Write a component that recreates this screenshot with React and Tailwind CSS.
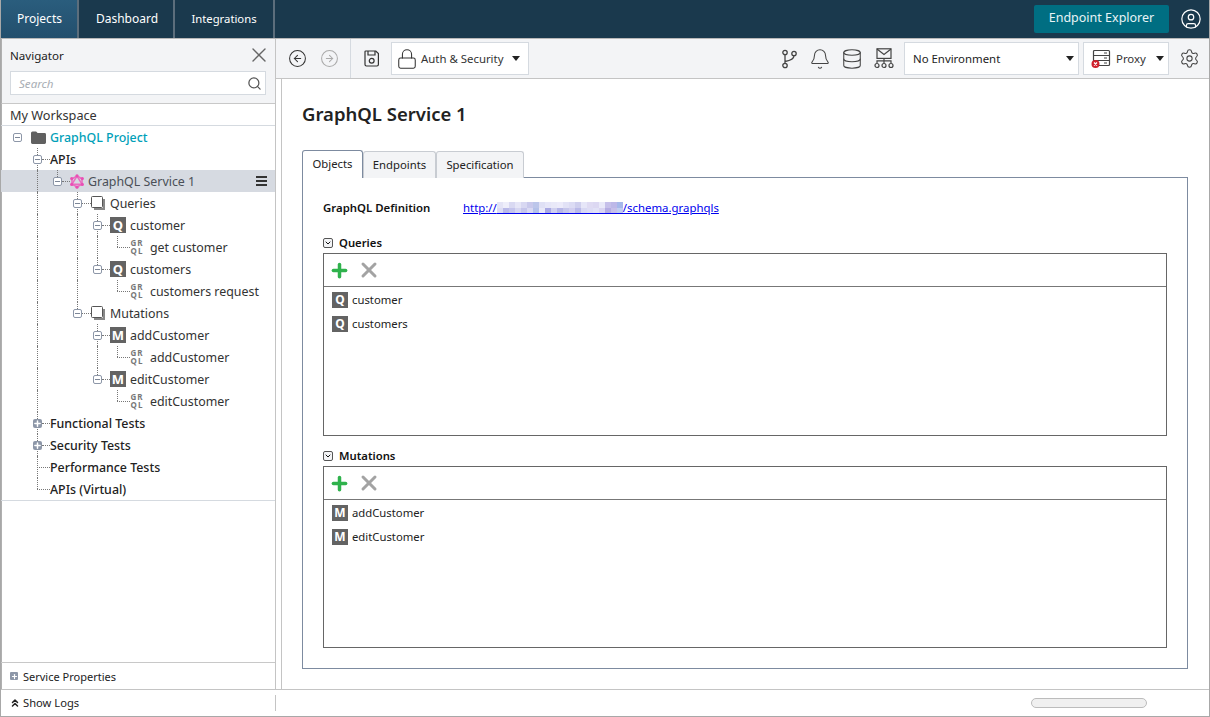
import React from "react";
import { CircleArrowLeft, CircleArrowRight, Lock, Bell, Database, Settings, CircleUser, Search, X, Plus, ChevronsUp, ChevronDown } from "lucide-react";

const Caret = () => <span className="w-0 h-0 border-x-[4px] border-x-transparent border-t-[5px] border-t-[#222]" />;

const Expander = ({ open }) =>
  open ? (
    <span className="relative z-10 w-[9px] h-[9px] shrink-0 rounded-[2px] border border-[#8d97a8] bg-white flex items-center justify-center">
      <span className="w-[5px] h-px bg-[#7d8798]" />
    </span>
  ) : (
    <span className="relative z-10 w-[9px] h-[9px] shrink-0 rounded-[2px] bg-[#8d97a8] text-white flex items-center justify-center">
      <Plus size={9} strokeWidth={4} />
    </span>
  );

const Stub = ({ w }) => <span className="border-t border-dotted border-[#777] shrink-0" style={{ width: w }} />;

const Letter = ({ c }) => (
  <span className="w-4 h-4 shrink-0 bg-[#636363] text-white text-[13px] leading-none font-bold flex items-center justify-center">{c}</span>
);

const Gql = () => (
  <span className="block w-[14px] shrink-0 text-[8px] leading-[8px] font-bold tracking-[1px] text-[#777] text-center">GR QL</span>
);

const Stack = () => (
  <svg width="14" height="15" viewBox="0 0 14 15" className="shrink-0">
    <path d="M3 13h10V3" fill="none" stroke="#888" strokeWidth="2" />
    <rect x="0.5" y="0.5" width="11" height="11" rx="1" fill="#fff" stroke="#555" />
  </svg>
);

const GqlLogo = () => (
  <svg width="14" height="15" viewBox="0 0 14 15" className="shrink-0">
    <g fill="none" stroke="#ea6cc0" strokeWidth="1.5">
      <path d="M7 2 12 4.8v5.4L7 13 2 10.2V4.8z" />
      <path d="M7 2 12 10.2H2z" />
    </g>
    <g fill="#e94fb5">
      <circle cx="7" cy="1.8" r="1.6" /><circle cx="12.3" cy="4.6" r="1.6" /><circle cx="12.3" cy="10.4" r="1.6" />
      <circle cx="7" cy="13.2" r="1.6" /><circle cx="1.7" cy="10.4" r="1.6" /><circle cx="1.7" cy="4.6" r="1.6" />
    </g>
  </svg>
);

const Folder = () => (
  <svg width="15" height="13" viewBox="0 0 15 13" className="shrink-0">
    <path d="M0 2a1.5 1.5 0 0 1 1.5-1.5h3.6L6.6 2h7A1.4 1.4 0 0 1 15 3.4v8.1a1.4 1.4 0 0 1-1.4 1.4H1.4A1.4 1.4 0 0 1 0 11.5z" fill="#606060" />
  </svg>
);

const X1 = 37, X2 = 57, X3 = 77, X4 = 97, X5 = 117;
const bold = "font-medium text-[#222]";
const rows = [
  { cx: 17, open: true, stub: 0, gap: 9, icon: <Folder />, label: "GraphQL Project", cls: "text-[#00a0b8] font-medium", tg: 4 },
  { cx: X1, open: true, stub: 8, label: "APIs", cls: bold, v: [[X1, "t"], [X1, "b"]] },
  { cx: X2, open: true, stub: 8, icon: <GqlLogo />, label: "GraphQL Service 1", cls: "text-[#4a4f57]", tg: 4, v: [[X1, "f"], [X2, "t"]], sel: true },
  { cx: X3, open: true, stub: 9, icon: <Stack />, label: "Queries", v: [[X1, "f"], [X3, "t"], [X3, "b"]], tg: 5 },
  { cx: X4, open: true, stub: 8, icon: <Letter c="Q" />, label: "customer", v: [[X1, "f"], [X3, "f"], [X4, "t"], [X4, "b"]], tg: 4 },
  { lx: X5, stub: 13, icon: <Gql />, label: "get customer", v: [[X1, "f"], [X3, "f"], [X4, "f"], [X5, "t"]], tg: 6 },
  { cx: X4, open: true, stub: 8, icon: <Letter c="Q" />, label: "customers", v: [[X1, "f"], [X3, "f"], [X4, "t"]], tg: 4 },
  { lx: X5, stub: 13, icon: <Gql />, label: "customers request", v: [[X1, "f"], [X3, "f"], [X5, "t"]], tg: 6 },
  { cx: X3, open: true, stub: 9, icon: <Stack />, label: "Mutations", v: [[X1, "f"], [X3, "t"]], tg: 5 },
  { cx: X4, open: true, stub: 8, icon: <Letter c="M" />, label: "addCustomer", v: [[X1, "f"], [X4, "t"], [X4, "b"]], tg: 4 },
  { lx: X5, stub: 13, icon: <Gql />, label: "addCustomer", v: [[X1, "f"], [X4, "f"], [X5, "t"]], tg: 6 },
  { cx: X4, open: true, stub: 8, icon: <Letter c="M" />, label: "editCustomer", v: [[X1, "f"], [X4, "t"]], tg: 4 },
  { lx: X5, stub: 13, icon: <Gql />, label: "editCustomer", v: [[X1, "f"], [X5, "t"]], tg: 6 },
  { cx: X1, open: false, stub: 8, label: "Functional Tests", cls: bold, v: [[X1, "t"], [X1, "b"]] },
  { cx: X1, open: false, stub: 8, label: "Security Tests", cls: bold, v: [[X1, "t"], [X1, "b"]] },
  { lx: X1, stub: 13, label: "Performance Tests", cls: bold, v: [[X1, "f"]] },
  { lx: X1, stub: 13, label: "APIs (Virtual)", cls: bold, v: [[X1, "t"]] },
];

const Row = ({ r }) => {
  const left = r.cx !== undefined ? r.cx - 5 : r.lx - 1;
  return (
    <div className={`relative h-[22px] flex items-center ${r.sel ? "bg-[#d6dae1]" : ""}`} style={{ paddingLeft: left }}>
      {(r.v || []).map(([x, k], i) => (
        <span
          key={i}
          className="absolute border-l border-dotted border-[#777]"
          style={{ left: x - 1, top: k === "b" ? 11 : 0, height: k === "f" ? 22 : 11 }}
        />
      ))}
      {r.cx !== undefined && <Expander open={r.open} />}
      {r.stub > 0 && <Stub w={r.stub} />}
      {r.gap ? <span style={{ width: r.gap }} /> : null}
      {r.icon}
      <span className={`whitespace-nowrap pt-[2px] ${r.cls || "text-[#333]"}`} style={{ marginLeft: r.tg || 0 }}>{r.label}</span>
      {r.sel && (
        <span className="ml-auto mr-[8px] w-[11px] flex flex-col gap-[2px]">
          <span className="h-[2px] bg-[#333]" /><span className="h-[2px] bg-[#333]" /><span className="h-[2px] bg-[#333]" />
        </span>
      )}
    </div>
  );
};

const Sidebar = () => (
  <aside className="w-[275px] shrink-0 flex flex-col border-r border-[#c4c4c4] bg-white text-[12.4px] leading-[22px] shadow-[inset_1px_0_0_#b0b0b0]">
    <div className="h-[65px] shrink-0 bg-[#f3f4f6] border-b border-[#c8c8c8] border-l border-l-[#b0b0b0] pl-[8px] pr-[9px] flex flex-col">
      <div className="h-[32px] flex items-center justify-between text-[#222] text-[11.6px]">
        <span className="pt-[2px]">Navigator</span>
        <X size={24} strokeWidth={1.4} className="text-[#666] -mr-[5px]" />
      </div>
      <div className="h-[24px] bg-white border border-[#d5dae0] flex items-center justify-between pl-[8px] pr-[3px]">
        <span className="italic text-[11.6px] text-[#a8adb4] pt-[2px]">Search</span>
        <Search size={15} strokeWidth={2} className="text-[#555]" />
      </div>
    </div>
    <div className="h-[22px] shrink-0 pl-[9px] border-b border-[#d5dae0] text-[#333] text-[12.7px] flex items-center">My Workspace</div>
    <div className="border-b border-[#d5dae0]">
      {rows.map((r, i) => <Row key={i} r={r} />)}
    </div>
    <div className="flex-1" />
    <div className="h-[27px] shrink-0 border-t border-[#c8c8c8] pl-[9px] flex items-center gap-[5px] text-[11px] text-[#222]">
      <span className="w-[8px] h-[8px] rounded-[1px] bg-[#8d97a8] text-white flex items-center justify-center"><Plus size={7} strokeWidth={4} /></span>
      <span className="pt-[1px]">Service Properties</span>
    </div>
  </aside>
);

const SaveIcon = () => (
  <svg width="16" height="17" viewBox="0 0 16 17" fill="none" stroke="#333" strokeWidth="1.2" className="shrink-0">
    <path d="M1.8 1h10l2.6 2.6v11a1.4 1.4 0 0 1-1.4 1.4H2.4A1.4 1.4 0 0 1 1 14.6V1.8A.8.8 0 0 1 1.8 1z" />
    <path d="M4 1v4h7V1" />
    <circle cx="7.7" cy="10.8" r="2.4" />
  </svg>
);

const Branch = () => (
  <svg width="15" height="20" viewBox="0 0 15 20" fill="none" stroke="#444" strokeWidth="1.3">
    <circle cx="3" cy="3.5" r="2.2" /><circle cx="3" cy="16.5" r="2.2" /><circle cx="12" cy="4.5" r="2.2" />
    <path d="M3 5.7v8.6M12 6.7c0 4-5 5-9 5.8" />
  </svg>
);

const NetMail = () => (
  <svg width="20" height="21" viewBox="0 0 20 21" fill="none" stroke="#444" strokeWidth="1.2">
    <rect x="3" y="0.8" width="14" height="9.6" />
    <path d="M3 1 10 6.5 17 1M10 10.5V15M3 15v-2.2h14V15" />
    <circle cx="3" cy="17.5" r="2" /><circle cx="10" cy="17.5" r="2" /><circle cx="17" cy="17.5" r="2" />
  </svg>
);

const ProxyIcon = () => (
  <svg width="20" height="20" viewBox="0 0 20 20" fill="none">
    <rect x="2.5" y="1.5" width="16" height="15" rx="1" stroke="#444" strokeWidth="1.2" />
    <path d="M2.5 6.5h16M2.5 11.5h16M13 4h3M13 9h3M13 14h3" stroke="#444" strokeWidth="1.2" />
    <circle cx="4.5" cy="15" r="4" fill="#d0202c" />
    <path d="M3 13.5l3 3M6 13.5l-3 3" stroke="#fff" strokeWidth="1.3" />
  </svg>
);

const Toolbar = () => (
  <div className="h-[40px] shrink-0 bg-[#f3f4f6] border-b border-[#c4c4c4] flex items-center text-[11.4px] text-[#333]">
    <div className="w-[75px] h-full shrink-0 border-r border-[#d5dae0] flex items-center pl-[12px] gap-[13px]">
      <CircleArrowLeft size={19} strokeWidth={1.3} className="text-[#333]" />
      <CircleArrowRight size={19} strokeWidth={1.3} className="text-[#aaa]" />
    </div>
    <span className="ml-[13px] flex"><SaveIcon /></span>
    <div className="ml-[11px] w-[138px] h-[33px] bg-white border border-[#d5dae0] flex items-center pl-[4px]">
      <Lock size={22} strokeWidth={1.15} className="text-[#333] shrink-0" />
      <span className="ml-[3px] whitespace-nowrap pt-[1px]">Auth &amp; Security</span>
      <span className="ml-[9px] flex"><Caret /></span>
    </div>
    <div className="ml-auto flex items-center">
      <Branch />
      <Bell size={22} strokeWidth={1.15} className="ml-[12px] text-[#444]" />
      <Database size={22} strokeWidth={1.15} className="ml-[10px] text-[#444]" />
      <span className="ml-[11px] flex"><NetMail /></span>
      <div className="ml-[10px] w-[175px] h-[33px] bg-white border border-[#d5dae0] flex items-center justify-between pl-[8px] pr-[4px]">
        <span className="text-[#222] pt-[1px]">No Environment</span><Caret />
      </div>
      <div className="ml-[4px] w-[86px] h-[33px] bg-white border border-[#d5dae0] flex items-center pl-[7px] pr-[4px]">
        <ProxyIcon />
        <span className="ml-[5px] text-[#333] pt-[1px]">Proxy</span>
        <span className="ml-auto flex"><Caret /></span>
      </div>
      <Settings size={21} strokeWidth={1.2} className="ml-[10px] mr-[9px] text-[#444]" />
    </div>
  </div>
);

const blurTop = ["#e4e4f6","#eeeefa","#d9d9f2","#e6e6f7","#d8d8f2","#c9c9ec","#bcc6ea","#dfe0f5","#e6e6f8","#e9e9f8","#ecebfa","#e2e2f6","#dcdcf4","#cfcfee","#e6e6f8","#dfdbf3","#dcd8f2","#e9e9f9","#c6c0ea","#bdb8e8","#a6b8ea"];
const blurBot = ["#dcdcf4","#b9b9e8","#c4c4ec","#d6d6f1","#c5c5eb","#d9d9f3","#b4c1e9","#e8e8f8","#a9a9e2","#d0d0ef","#b6b6e6","#c6c6eb","#d2cff0","#b9b9e8","#d8d8f3","#dddcf5","#e1e1f6","#d9d4f2","#b4ace2","#c6bfe9","#c0cdf0"];

const Blur = () => (
  <span className="inline-flex flex-col w-[126px] h-[12px] border-b border-[#0000ee] mt-[1px]">
    <span className="flex h-[6px]">{blurTop.map((c, i) => <span key={i} className="w-[6px] h-full shrink-0" style={{ background: c }} />)}</span>
    <span className="flex h-[5px]">{blurBot.map((c, i) => <span key={i} className="w-[6px] h-full shrink-0" style={{ background: c }} />)}</span>
  </span>
);

const Section = ({ title, items, c, grow }) => (
  <div>
    <div className="h-[16px] flex items-center gap-[6px] font-semibold text-[11.3px] text-[#111]">
      <span className="w-[10px] h-[10px] border border-[#555] rounded-[2px] bg-[#f3f4f6] flex items-center justify-center">
        <ChevronDown size={8} strokeWidth={3} />
      </span>
      {title}
    </div>
    <div className={`mt-[2px] border border-[#666] flex flex-col ${grow}`}>
      <div className="h-[33px] shrink-0 border-b border-[#777] flex items-center">
        <span className="w-[30px] flex justify-center"><Plus size={21} strokeWidth={4} className="text-[#2fb24c]" /></span>
        <span className="w-[30px] flex justify-center"><X size={24} strokeWidth={3} className="text-[#a3a3a3]" /></span>
      </div>
      <div className="pt-[1px]">
        {items.map((t) => (
          <div key={t} className="h-[24px] flex items-center pl-[8px] gap-[4px] text-[11.3px] text-[#222]">
            <span className="w-4 h-4 shrink-0 bg-[#636363] text-white text-[12px] leading-none font-bold flex items-center justify-center">{c}</span>
            {t}
          </div>
        ))}
      </div>
    </div>
  </div>
);

const Content = () => (
  <div className="flex-1 min-h-0 ml-[5px] border-l border-[#c4c4c4] pl-[20px] pr-[21px] bg-white">
    <h1 className="h-[71px] pb-[2px] flex items-center text-[18.5px] font-semibold text-[#222]">GraphQL Service 1</h1>
    <div className="flex items-end text-[11.3px] h-[28px] relative z-10 -mb-px">
      <div className="w-[61px] h-[28px] bg-white border border-b-0 border-[#7d8ba0] rounded-t-[3px] flex items-center justify-center text-[#222]">Objects</div>
      <div className="w-[73px] h-[27px] bg-[#f3f4f6] border border-b-0 border-[#c8ccd2] rounded-t-[3px] flex items-center justify-center text-[#222]">Endpoints</div>
      <div className="w-[88px] h-[27px] bg-[#f3f4f6] border border-b-0 border-[#c8ccd2] rounded-t-[3px] flex items-center justify-center text-[#222]">Specification</div>
    </div>
    <div className="h-[492px] border border-[#7d8ba0] px-[20px]">
      <div className="h-[57px] pt-[3px] flex items-center text-[11.4px]">
        <span className="w-[140px] font-semibold text-[#111]">GraphQL Definition</span>
        <span className="flex items-center text-[#0000ee]">
          <span className="underline">http://</span><Blur /><span className="underline">/schema.graphqls</span>
        </span>
      </div>
      <Section title="Queries" items={["customer", "customers"]} c="Q" grow="h-[183px]" />
      <div className="h-[12px]" />
      <Section title="Mutations" items={["addCustomer", "editCustomer"]} c="M" grow="h-[182px]" />
    </div>
  </div>
);

export default function App() {
  return (
    <div className="w-[1210px] h-[717px] flex flex-col overflow-hidden bg-white border-x border-b border-[#a8a8a8] [font-family:'Noto_Sans',sans-serif]">
      <header className="h-[38px] shrink-0 -mx-px bg-[#1a394d] flex items-stretch text-[12px] text-white">
        <div className="w-[79px] pl-[2px] bg-[linear-gradient(#2a5d7d,#234f6d)] border-r-2 border-[#5c6e7c] flex items-center justify-center">Projects</div>
        <div className="w-[96px] pl-[2px] border-r-2 border-[#5c6e7c] flex items-center justify-center">Dashboard</div>
        <div className="w-[100px] border-r-2 border-[#5c6e7c] flex items-center justify-center text-[11.3px]">Integrations</div>
        <div className="ml-auto flex items-center">
          <div className="w-[135px] h-[28px] pb-[2px] bg-[#006e82] rounded-[2px] flex items-center justify-center text-[12.5px] text-[#e8f4f6]">Endpoint Explorer</div>
          <CircleUser size={22} strokeWidth={1.3} className="ml-[11px] mr-[8px]" />
        </div>
      </header>
      <div className="flex-1 min-h-0 flex border-t border-[#b8b8b8]">
        <Sidebar />
        <main className="flex-1 min-w-0 flex flex-col">
          <Toolbar />
          <Content />
        </main>
      </div>
      <footer className="h-[27px] shrink-0 border-t border-[#c4c4c4] flex items-center text-[11.2px] text-[#222]">
        <div className="w-[275px] h-[16px] border-r border-[#c4c4c4] pl-[8px] flex items-center gap-[2px]">
          <ChevronsUp size={12} strokeWidth={3} />
          <span className="pt-[1px]">Show Logs</span>
        </div>
        <div className="ml-auto mr-[62px] w-[116px] h-[10px] bg-[#f0f0f0] border border-[#bcbcbc] rounded-full" />
      </footer>
    </div>
  );
}
